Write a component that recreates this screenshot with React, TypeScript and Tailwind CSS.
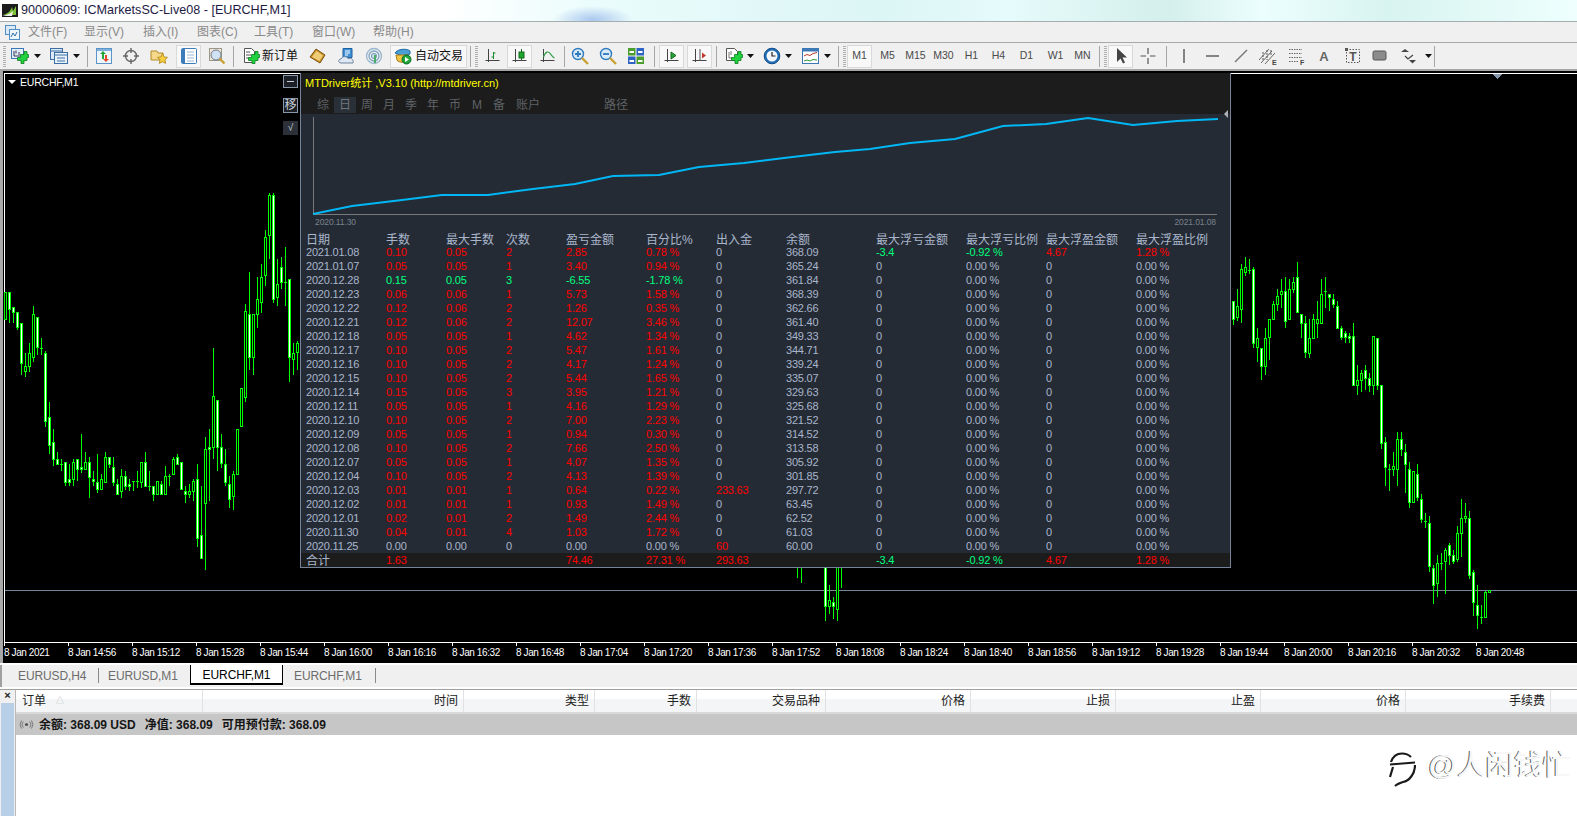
import React from "react";

const CN = '"Liberation Sans","Noto Sans CJK SC",sans-serif';

// [wickTop, bodyTop, bodyBottom, wickBottom, white?]  in zoom units
const LEFT: number[][] = [
[335,335,418,418,0],[335,335,388,425,1],[380,380,395,425,1],[395,395,440,447,1],[430,430,550,582,1],[520,557,572,587,0],[490,520,557,572,0],[378,403,530,542,0],[410,410,500,522,1],[475,505,505,522,0],
[514,520,722,737,1],[667,712,794,820,1],[748,787,838,855,1],[817,838,853,853,1],[838,853,853,870,0],[847,847,905,915,1],[852,898,905,915,1],[838,847,898,915,0],[838,838,868,900,1],[762,860,868,876,1],
[817,847,868,868,0],[832,847,890,950,1],[874,898,904,915,1],[823,905,928,935,1],[882,898,928,928,0],[817,832,905,905,0],[832,832,853,860,1],[832,860,905,915,1],[898,913,943,943,1],[868,889,934,950,0],
[874,889,919,928,1],[898,913,919,930,1],[904,904,904,930,0],[874,904,904,920,0],[847,847,905,920,0],[817,847,919,919,1],[874,919,919,930,0],[919,919,943,960,1],[904,904,943,943,0],[904,913,943,943,1],
[858,889,943,943,0],[882,889,889,915,0],[832,838,883,883,0],[823,832,853,853,1],[847,847,928,928,1],[919,934,943,965,1],[912,934,943,950,0],[898,904,934,960,0],[852,898,1075,1098,1],[919,1066,1135,1135,1],
[772,808,970,1166,0],[748,802,808,960,1],[505,647,802,833,0],[661,661,802,870,1],[763,802,848,860,1],[808,853,905,915,1],[889,913,958,980,1],[874,883,949,987,0],[748,748,883,883,0],[625,625,737,737,0],
[373,394,652,662,0],[277,403,530,567,1],[403,403,530,582,0],[292,358,403,440,0],[253,292,365,395,0],[151,172,284,315,0],[40,46,166,235,0],[40,46,358,365,1],[238,313,350,375,0],[232,262,307,323,1],
[202,307,307,375,0],[298,298,530,603,1],[490,520,536,582,0],[484,490,515,567,0],
];
const RIGHT: number[][] = [
[154,154,208,222,1],[118,169,200,210,0],[42,58,178,216,0],[22,52,67,75,0],[27,60,60,69,0],[52,58,280,290,1],[235,265,290,333,0],[295,295,347,387,1],[235,265,347,372,0],[208,208,260,327,0],
[153,163,208,208,0],[118,139,163,180,0],[88,124,133,170,0],[82,124,214,231,1],[88,118,208,208,0],[82,97,118,125,0],[37,82,185,185,1],[193,193,220,261,1],[198,220,305,320,1],[208,265,310,320,0],
[193,208,265,265,0],[153,208,220,262,0],[88,133,220,220,0],[82,124,124,170,0],[133,133,140,180,1],[133,148,163,171,1],[154,169,235,235,1],[228,235,260,267,1],[244,250,260,275,1],[250,259,265,275,1],
[220,259,406,406,1],[346,391,406,432,0],[361,370,391,423,0],[346,361,385,417,1],[370,385,406,423,1],[259,259,406,432,0],[265,265,406,417,1],[406,406,578,594,1],[562,577,650,705,1],[643,658,658,720,0],
[607,649,658,675,0],[547,568,658,705,0],[547,568,598,615,1],[583,607,643,726,1],[637,658,755,771,1],[664,664,755,755,0],[643,673,740,750,1],[733,748,806,816,1],[790,814,814,830,0],[799,820,947,962,1],
[946,955,1006,1059,1],[915,940,998,1038,0],[910,940,940,956,0],[895,901,932,1029,0],[880,886,916,942,1],[900,916,932,940,1],[828,850,926,933,0],[748,805,850,918,0],[760,799,805,816,0],[784,805,976,984,1],
[961,967,1057,1094,1],[1005,1066,1094,1134,1],[1066,1102,1102,1118,0],[1022,1027,1102,1102,0],[1021,1021,1027,1027,0],
];

function Candle({ x, d, oy }: { x: number; d: number[]; oy: number }) {
  const [t, a, b, w, f] = d.map((v, i) => (i < 4 ? Math.round(oy + v / 3) : v));
  return (
    <g>
      <line x1={x + 0.5} x2={x + 0.5} y1={t} y2={w + 1} stroke="#00ff00" />
      {a === b ? (
        <line x1={x - 1} x2={x + 2} y1={a + 0.5} y2={a + 0.5} stroke="#00ff00" />
      ) : (
        <rect x={x - 0.5} y={a + 0.5} width={2} height={b - a} fill={f ? "#ffffff" : "#000000"} stroke="#00ff00" />
      )}
    </g>
  );
}

function Chart() {
  return (
    <svg className="absolute left-0 top-0" width={1574} height={592} viewBox="3 71 1574 592" shapeRendering="crispEdges">
      <line x1={5} x2={1577} y1={590.5} y2={590.5} stroke="#75849a" />
      {LEFT.map((d, i) => <Candle key={i} x={5 + 4 * i} d={d} oy={180} />)}
      {RIGHT.map((d, i) => <Candle key={i} x={1233 + 4 * i} d={d} oy={250} />)}
      <line x1={797.5} x2={797.5} y1={560} y2={578} stroke="#00ff00" />
      <line x1={801.5} x2={801.5} y1={560} y2={583} stroke="#00ff00" />
      <Candle x={825} d={[60, 60, 198, 240, 1]} oy={540} />
      <Candle x={829} d={[135, 180, 197, 218, 0]} oy={540} />
      <Candle x={833} d={[172, 186, 197, 234, 1]} oy={540} />
      <Candle x={837} d={[60, 60, 208, 240, 0]} oy={540} />
      <line x1={841.5} x2={841.5} y1={560} y2={588} stroke="#00ff00" />
      <polygon points="1492,74 1502,74 1497,79" fill="#8496a8" />
    </svg>
  );
}

const ROWS: string[][] = [
["2021.01.08","0.10","0.05","2","2.85","0.78 %","0","368.09"],
["2021.01.07","0.05","0.05","1","3.40","0.94 %","0","365.24"],
["2020.12.28","0.15","0.05","3","-6.55","-1.78 %","0","361.84"],
["2020.12.23","0.06","0.06","1","5.73","1.58 %","0","368.39"],
["2020.12.22","0.12","0.06","2","1.26","0.35 %","0","362.66"],
["2020.12.21","0.12","0.06","2","12.07","3.46 %","0","361.40"],
["2020.12.18","0.05","0.05","1","4.62","1.34 %","0","349.33"],
["2020.12.17","0.10","0.05","2","5.47","1.61 %","0","344.71"],
["2020.12.16","0.10","0.05","2","4.17","1.24 %","0","339.24"],
["2020.12.15","0.10","0.05","2","5.44","1.65 %","0","335.07"],
["2020.12.14","0.15","0.05","3","3.95","1.21 %","0","329.63"],
["2020.12.11","0.05","0.05","1","4.16","1.29 %","0","325.68"],
["2020.12.10","0.10","0.05","2","7.00","2.23 %","0","321.52"],
["2020.12.09","0.05","0.05","1","0.94","0.30 %","0","314.52"],
["2020.12.08","0.10","0.05","2","7.66","2.50 %","0","313.58"],
["2020.12.07","0.05","0.05","1","4.07","1.35 %","0","305.92"],
["2020.12.04","0.10","0.05","2","4.13","1.39 %","0","301.85"],
["2020.12.03","0.01","0.01","1","0.64","0.22 %","233.63","297.72"],
["2020.12.02","0.01","0.01","1","0.93","1.49 %","0","63.45"],
["2020.12.01","0.02","0.01","2","1.49","2.44 %","0","62.52"],
["2020.11.30","0.04","0.01","4","1.03","1.72 %","0","61.03"],
["2020.11.25","0.00","0.00","0","0.00","0.00 %","60","60.00"],
];
const GRID = "grid grid-cols-[80px_60px_60px_60px_80px_70px_70px_90px_90px_80px_90px_1fr] h-[14px] items-center leading-[14px] whitespace-nowrap";
const HEAD = ["日期","手数","最大手数","次数","盈亏金额","百分比%","出入金","余额","最大浮亏金额","最大浮亏比例","最大浮盈金额","最大浮盈比例"];
const GREY = "text-[#a9b6cc]", RED = "text-[#ff0000]", GRN = "text-[#00ff7f]";

function Row({ r, first }: { r: string[]; first: boolean }) {
  const neg = r[4].startsWith("-");
  const zero = r[4] === "0.00";
  const c = zero ? GREY : neg ? GRN : RED;
  const io = r[6] === "0" ? GREY : RED;
  return (
    <div className={GRID}>
      <span className={GREY}>{r[0]}</span>
      {r.slice(1, 6).map((v, i) => <span key={i} className={c}>{v}</span>)}
      <span className={io}>{r[6]}</span>
      <span className={GREY}>{r[7]}</span>
      {first ? (
        <>
          <span className={GRN}>-3.4</span><span className={GRN}>-0.92 %</span>
          <span className={RED}>4.67</span><span className={RED}>1.28 %</span>
        </>
      ) : (
        <>
          <span className={GREY}>0</span><span className={GREY}>0.00 %</span>
          <span className={GREY}>0</span><span className={GREY}>0.00 %</span>
        </>
      )}
    </div>
  );
}

const CURVE = "313,214 352,206 402,200 442,195 488,195 533,189 575,184 613,176 659,175 699,167 744,163 784,158 835,152 870,149 910,143 955,139 1003,126 1046,124 1088,118 1133,125 1177,121 1218,119";

function Panel() {
  const tabs = ["综","日","周","月","季","年","币","M","备"];
  return (
    <div className="absolute left-[297px] top-[2px] w-[931px] h-[495px] bg-[#252b34] border-l border-r border-b border-[#75849a] flex flex-col text-[11px] tracking-[-0.2px]">
      <div className="bg-[#1c1c1c] h-[41px] shrink-0 flex flex-col">
        <div className="h-[20px] pl-[4px] pt-[1px] flex items-center text-[#ffff00] text-[11px] tracking-normal whitespace-nowrap">MTDriver统计 ,V3.10 (http://mtdriver.cn)</div>
        <div className="mt-[4px] h-[16px] pl-[11px] flex items-center text-[#5e6266] text-[12px] tracking-normal">
          {tabs.map((t, i) => (
            <span key={i} className={i === 1 ? "w-[22px] h-[16px] leading-[17px] text-[#72767c] bg-[#2a3038] text-center" : "w-[22px] h-[16px] leading-[17px] text-center"}>{t}</span>
          ))}
          <span className="ml-[6px] w-[88px] leading-[17px]">账户</span>
          <span className="leading-[17px]">路径</span>
        </div>
      </div>
      <div className="h-[117px] shrink-0 flex flex-col">
        <svg width={928} height={103} viewBox="301 114 928 103" className="block overflow-visible">
          <polyline points="313.5,117 313.5,214.5 1217,214.5" fill="none" stroke="#77797c" shapeRendering="crispEdges" />
          <polyline points={CURVE} fill="none" stroke="#00b7f5" strokeWidth={2} />
          <polygon points="1224,114 1228,110 1228,118" fill="#aeb2b6" />
        </svg>
        <div className="h-[10px] flex justify-between pl-[14px] pr-[14px] text-[8.5px] leading-[10px] tracking-[-0.1px] text-[#79828e]">
          <span>2020.11.30</span><span>2021.01.08</span>
        </div>
      </div>
      <div className="pl-[5px]">
        <div className={GRID + " text-[12px] tracking-normal"}>
          {HEAD.map((h, i) => <span key={i} className={GREY + " translate-y-[2px]"}>{h}</span>)}
        </div>
        {ROWS.map((r, i) => <Row key={i} r={r} first={i === 0} />)}
      </div>
      <div className="bg-[#1c1c1c] h-[14px] pl-[5px] overflow-hidden">
        <div className={GRID}>
          <span className={GREY + " text-[12px] tracking-normal translate-y-[1px]"}>合计</span>
          <span className={RED}>1.63</span><span /><span />
          <span className={RED}>74.46</span><span className={RED}>27.31 %</span><span className={RED}>293.63</span><span />
          <span className={GRN}>-3.4</span><span className={GRN}>-0.92 %</span>
          <span className={RED}>4.67</span><span className={RED}>1.28 %</span>
        </div>
      </div>
    </div>
  );
}

const TIMES = ["8 Jan 2021","8 Jan 14:56","8 Jan 15:12","8 Jan 15:28","8 Jan 15:44","8 Jan 16:00","8 Jan 16:16","8 Jan 16:32","8 Jan 16:48","8 Jan 17:04","8 Jan 17:20","8 Jan 17:36","8 Jan 17:52","8 Jan 18:08","8 Jan 18:24","8 Jan 18:40","8 Jan 18:56","8 Jan 19:12","8 Jan 19:28","8 Jan 19:44","8 Jan 20:00","8 Jan 20:16","8 Jan 20:32","8 Jan 20:48"];

/* ---------- toolbar icons ---------- */
const S = ({ children, w = 18, h = 18 }: { children: React.ReactNode; w?: number; h?: number }) => (
  <svg width={w} height={h} viewBox={`0 0 ${w} ${h}`} className="block shrink-0">{children}</svg>
);
const Plus = () => <path d="M9.5 7.5h3.5V4.5h3v3h1.500v3H16v3h-3v3h-3v-3H6.500v-3h3z" fill="#22d13e" stroke="#0b7d1e" strokeWidth={0.8} />;
const Caret = () => <svg width={7} height={4} viewBox="0 0 7 4" className="block shrink-0"><path d="M0 0h7L3.500 4z" fill="#111" /></svg>;
const Axis = ({ c = "#444" }: { c?: string }) => <path d="M4.500 2v13M1.500 13.500h14" stroke={c} strokeWidth={1} fill="none" />;

const I = {
  newChart: <S><rect x=".5" y="1.500" width="12" height="10" fill="#e3eef8" stroke="#3b78b5" /><path d="M3 4v5h7M5 3.500v3M8 5v3" stroke="#335" fill="none" /><Plus /></S>,
  profiles: <S><rect x=".5" y="1.500" width="12" height="11" fill="#dfe9f5" stroke="#3b6ea5" /><rect x="4.500" y="5.500" width="13" height="11" fill="#eaf2fa" stroke="#3b6ea5" /><path d="M1 4h11M5 8h12M7 11h8M7 14h8" stroke="#3b6ea5" /></S>,
  market: <S><rect x="1.500" y="1.500" width="15" height="15" fill="#eef5fb" stroke="#5c93c8" /><rect x="2" y="2" width="14" height="2" fill="#7fb0dc" /><path d="M7 12V7H5l3-3 3 3H9v5z" fill="#25a83a" /><path d="M10 8h2v4h2l-3 3-3-3h2z" fill="#e24a2b" /></S>,
  cross: <S><circle cx="9" cy="9" r="5.500" fill="none" stroke="#666" strokeWidth={1.4} /><path d="M9 1v5M9 12v5M1 9h5M12 9h5" stroke="#666" strokeWidth={1.4} /></S>,
  nav: <S><path d="M1 4h6l1 2h5v7H1z" fill="#f4d98a" stroke="#b58c2a" /><path d="M12.500 6.500l1.600 3.400 3.400.5-2.500 2.400.6 3.600-3.100-1.700-3.100 1.700.6-3.600-2.500-2.400 3.400-.5z" fill="#f5cf3f" stroke="#a97f16" strokeWidth={.8} /></S>,
  term: <S><rect x="1.500" y="1.500" width="15" height="15" rx="1" fill="#fff" stroke="#3c7cba" /><rect x="2" y="2" width="3" height="14" fill="#3c7cba" /><path d="M7 5h7M7 8h7M7 11h7M7 14h7" stroke="#9ab8d6" /></S>,
  tester: <S><rect x="1.500" y="1.500" width="12" height="12" fill="#eee6dc" stroke="#998" /><circle cx="8" cy="8" r="5" fill="#cfe3f4" stroke="#778" /><path d="M11.500 11.500l5 5" stroke="#c9a032" strokeWidth={2.4} /></S>,
  order: <S><path d="M2.500 1.500h7l3 3v6h-2v5h-8z" fill="#fff" stroke="#555" /><path d="M4 5h4M4 8h5M4 11h3" stroke="#555" /><Plus /></S>,
  book: <S><path d="M1 10L7 2l9 6-5 8z" fill="#c98f24" stroke="#7a5210" /><path d="M3 10l4.500-6 6.500 4.500-3.500 5.500z" fill="#efcd78" /></S>,
  doc: <S><path d="M5 1.500h9v9H5z" fill="#3d8fd6" stroke="#1e5f9e" /><path d="M7 4h5M7 6h5M7 8h3" stroke="#fff" /><path d="M3 16c-3 0-3-4 0-4 1-3 6-3 7-.5 3-1 6 1 5 4.500z" fill="#dfe8f2" stroke="#6d84a0" /></S>,
  signal: <S><circle cx="9" cy="9" r="7.500" fill="none" stroke="#9db9d0" strokeWidth={1.4} /><circle cx="9" cy="9" r="5" fill="none" stroke="#7ea4c4" strokeWidth={1.3} /><circle cx="9" cy="9" r="2.600" fill="#c9dae8" stroke="#6f96b5" /><path d="M10 8v8" stroke="#2da84a" strokeWidth={1.6} /></S>,
  auto: <S><path d="M1 6c2-4 12-5 15-2v3l-8 2z" fill="#4a9fd8" stroke="#236a9e" /><path d="M2 8h12v5c0 3-10 3-11 0z" fill="#f3c545" stroke="#a37c14" /><circle cx="12.500" cy="12.500" r="4.500" fill="#1fa63a" stroke="#0b6d22" /><path d="M11 10l4 2.500-4 2.500z" fill="#fff" /></S>,
  bars: <S><Axis /><path d="M9.500 5v7M7.500 10h2M9.500 6h2" stroke="#1a8a2a" /></S>,
  candle: <S><Axis /><rect x="8" y="5" width="5" height="6" fill="#1fa62f" stroke="#116a1c" /><path d="M10.500 2v3M10.500 11v2" stroke="#116a1c" /></S>,
  line: <S><Axis /><path d="M4.500 10c2-6 5-6 7-3 1 1 2 3 4 4" stroke="#3aa04a" fill="none" strokeWidth={1.2} /></S>,
  zin: <S><circle cx="7" cy="7" r="5.500" fill="#d8ebfa" stroke="#2f79bd" strokeWidth={1.4} /><path d="M4 7h6M7 4v6" stroke="#2f79bd" strokeWidth={1.8} /><path d="M11 11l6 6" stroke="#c9a032" strokeWidth={2.4} /></S>,
  zout: <S><circle cx="7" cy="7" r="5.500" fill="#d8ebfa" stroke="#2f79bd" strokeWidth={1.4} /><path d="M4 7h6" stroke="#2f79bd" strokeWidth={1.8} /><path d="M11 11l6 6" stroke="#c9a032" strokeWidth={2.4} /></S>,
  tile: <S><rect x="1" y="1" width="7.500" height="7.500" fill="#4b9e2d" /><rect x="9.500" y="1" width="7.500" height="7.500" fill="#2c63c4" /><rect x="1" y="9.500" width="7.500" height="7.500" fill="#2c63c4" /><rect x="9.500" y="9.500" width="7.500" height="7.500" fill="#4b9e2d" /><path d="M2.500 5h4.500M11 5h4.500M2.500 14h4.500M11 14h4.500" stroke="#fff" strokeWidth={2} /></S>,
  scroll: <S><Axis /><path d="M8 5l5 3.500-5 3.500z" fill="#2aa53a" stroke="#116a1c" /></S>,
  shift: <S><Axis /><path d="M9 2v12" stroke="#555" /><path d="M15 8.500l-4-3v6z" fill="#c0392b" /></S>,
  tpl: <S><path d="M1.500 1.500h8l3 3v9h-11z" fill="#fff" stroke="#555" /><path d="M4 5v6h3M6 4v4" stroke="#777" fill="none" /><Plus /></S>,
  clock: <S><circle cx="9" cy="9" r="7.800" fill="#1f6fb8" stroke="#124b85" /><circle cx="9" cy="9" r="5.500" fill="#f3f7fb" /><path d="M9 5v4h3.500" stroke="#222" fill="none" strokeWidth={1.2} /></S>,
  ind: <S><rect x=".5" y="1.500" width="16" height="15" fill="#fff" stroke="#3b78b5" /><rect x="1" y="2" width="15" height="2.500" fill="#3b78b5" /><path d="M2 9l3-1.500 3 1 3-2 4-1" stroke="#b63a2a" fill="none" /><path d="M2 14l3-1 3 1 3-1.500 4 .5" stroke="#2a9a3a" fill="none" /></S>,
  arrow: <S><path d="M5 1v14l3.500-3.500 2.500 5 2-1-2.500-5H15z" fill="#444" /></S>,
  plus: <S><path d="M9 1v6M9 11v6M1.500 9h5.500M11 9h5.500" stroke="#555" strokeWidth={1.2} /></S>,
  v: <S><path d="M9 2v14" stroke="#555" strokeWidth={1.4} /></S>,
  h: <S><path d="M2 9h13" stroke="#555" strokeWidth={1.4} /></S>,
  t: <S><path d="M3 15L15 3" stroke="#777" strokeWidth={1.5} /></S>,
  chan: <S w={20}><path d="M1 13L11 2M3 16L14 4M7 17L17 6" stroke="#666" /><path d="M5 5v9M9 3v10M13 3v6" stroke="#555" strokeDasharray="2 1" /><text x="14" y="18" fontSize="7" fontWeight="700" fontFamily="Liberation Sans" fill="#444">E</text></S>,
  fibo: <S w={20}><path d="M2 2.500h13M2 6.500h13M2 10.500h13M2 14.500h10" stroke="#666" strokeDasharray="1.500 1" /><text x="13" y="18" fontSize="7" fontWeight="700" fontFamily="Liberation Sans" fill="#444">F</text></S>,
  a: <S><text x="9" y="14" textAnchor="middle" fontSize="13" fontWeight="700" fontFamily="Liberation Sans" fill="#666">A</text></S>,
  txt: <S><rect x="2.500" y="2.500" width="13" height="13" fill="none" stroke="#555" strokeDasharray="1.500 1.500" /><rect x="1" y="1" width="3" height="3" fill="#555" /><text x="9" y="14" textAnchor="middle" fontSize="12" fontWeight="700" fontFamily="Liberation Sans" fill="#555">T</text></S>,
  rect: <S><rect x="2" y="4" width="13" height="9" rx="1.500" fill="#8c8c8c" stroke="#555" /></S>,
  arrows: <S><path d="M5 2l4 3H1z" fill="#444" /><path d="M5 9l3 3 5-4" stroke="#444" fill="none" strokeWidth={1.2} /><path d="M9 13h7l-3.500 3.500z" fill="#444" /></S>,
};

const Sep = ({ w }: { w: string }) => (
  <div className={`${w} h-full flex items-center justify-center shrink-0`}><div className="w-[1px] h-[21px] bg-[#a6a6a6]" /></div>
);
const Grip = ({ w }: { w: string }) => (
  <div className={`${w} h-full flex items-center justify-center shrink-0`}><div className="w-[3px] h-[21px] bg-[repeating-linear-gradient(#b0b0b0_0,#b0b0b0_1px,transparent_1px,transparent_2px)]" /></div>
);
const Btn = ({ cls, on, children }: { cls: string; on?: boolean; children: React.ReactNode }) => (
  <div className={`${cls} h-[23px] flex items-center justify-center shrink-0 ${on ? "bg-[#f8f8f8] border border-[#d9d9d9]" : ""}`}>{children}</div>
);
const Tf = ({ cls, on, t }: { cls: string; on?: boolean; t: string }) => (
  <Btn cls={cls} on={on}><span className="text-[10.5px] text-[#4a4a4a]">{t}</span></Btn>
);

function Toolbar() {
  return (
    <div className="h-[29px] bg-[#f0f0f0] border-t border-[#a8a8a8] border-b-2 border-b-[#a6a6a6] flex items-center shrink-0" >
      <Grip w="ml-[1px] w-[6px]" />
      <Btn cls="ml-[1px] w-[36px] gap-[5px]">{I.newChart}<Caret /></Btn>
      <Btn cls="ml-[3px] w-[36px] gap-[5px]">{I.profiles}<Caret /></Btn>
      <Sep w="w-[8px]" />
      <Btn cls="w-[25px]">{I.market}</Btn>
      <Btn cls="ml-[2px] w-[25px]">{I.cross}</Btn>
      <Btn cls="ml-[3px] w-[26px]">{I.nav}</Btn>
      <Btn cls="ml-[4px] w-[25px]" on>{I.term}</Btn>
      <Btn cls="ml-[3px] w-[25px]">{I.tester}</Btn>
      <Sep w="w-[8px]" />
      <Btn cls="ml-[3px] w-[60px] gap-[2px]">{I.order}<span className="text-[12px] text-[#111] whitespace-nowrap">新订单</span></Btn>
      <Btn cls="ml-[5px] w-[25px]">{I.book}</Btn>
      <Btn cls="ml-[4px] w-[25px]">{I.doc}</Btn>
      <Btn cls="ml-[2px] w-[25px]">{I.signal}</Btn>
      <Btn cls="ml-[4px] w-[77px] gap-[3px]" on>{I.auto}<span className="text-[12px] text-[#111] whitespace-nowrap">自动交易</span></Btn>
      <Sep w="w-[6px]" />
      <Grip w="w-[7px]" />
      <Btn cls="w-[25px]">{I.bars}</Btn>
      <Btn cls="ml-[2px] w-[25px]" on>{I.candle}</Btn>
      <Btn cls="ml-[3px] w-[25px]">{I.line}</Btn>
      <Sep w="w-[8px]" />
      <Btn cls="w-[23px]">{I.zin}</Btn>
      <Btn cls="ml-[4px] w-[25px]">{I.zout}</Btn>
      <Btn cls="ml-[3px] w-[25px]">{I.tile}</Btn>
      <Sep w="ml-[2px] w-[8px]" />
      <Btn cls="ml-[1px] w-[25px]" on>{I.scroll}</Btn>
      <Btn cls="ml-[3px] w-[25px]" on>{I.shift}</Btn>
      <Sep w="w-[8px]" />
      <Btn cls="ml-[2px] w-[34px] gap-[4px]">{I.tpl}<Caret /></Btn>
      <Btn cls="ml-[4px] w-[35px] gap-[4px]">{I.clock}<Caret /></Btn>
      <Btn cls="ml-[3px] w-[36px] gap-[4px]">{I.ind}<Caret /></Btn>
      <Sep w="w-[8px]" />
      <Grip w="w-[5px]" />
      <Tf cls="w-[25px]" on t="M1" />
      <Tf cls="ml-[3px] w-[25px]" t="M5" />
      <Tf cls="ml-[3px] w-[25px]" t="M15" />
      <Tf cls="ml-[3px] w-[25px]" t="M30" />
      <Tf cls="ml-[3px] w-[25px]" t="H1" />
      <Tf cls="ml-[2px] w-[25px]" t="H4" />
      <Tf cls="ml-[3px] w-[25px]" t="D1" />
      <Tf cls="ml-[4px] w-[25px]" t="W1" />
      <Tf cls="ml-[2px] w-[25px]" t="MN" />
      <Sep w="w-[8px]" />
      <Grip w="w-[5px]" />
      <Btn cls="w-[25px]" on>{I.arrow}</Btn>
      <Btn cls="ml-[2px] w-[25px]">{I.plus}</Btn>
      <Sep w="ml-[2px] w-[8px]" />
      <Btn cls="ml-[1px] w-[25px]">{I.v}</Btn>
      <Btn cls="ml-[4px] w-[25px]">{I.h}</Btn>
      <Btn cls="ml-[3px] w-[25px]">{I.t}</Btn>
      <Btn cls="ml-[2px] w-[25px]">{I.chan}</Btn>
      <Btn cls="ml-[4px] w-[25px]">{I.fibo}</Btn>
      <Btn cls="ml-[2px] w-[25px]">{I.a}</Btn>
      <Btn cls="ml-[4px] w-[25px]">{I.txt}</Btn>
      <Btn cls="ml-[2px] w-[25px]">{I.rect}</Btn>
      <Btn cls="ml-[4px] w-[34px] justify-start pl-[4px] gap-[7px]">{I.arrows}<Caret /></Btn>
      <Sep w="w-[8px]" />
    </div>
  );
}

const COLS: [string, string][] = [
  ["w-[261px]","时间"],["w-[131px]","类型"],["w-[102px]","手数"],["w-[129px]","交易品种"],["w-[145px]","价格"],
  ["w-[145px]","止损"],["w-[145px]","止盈"],["w-[145px]","价格"],["w-[145px]","手续费"],
];

export default function App() {
  return (
    <div className="w-[1577px] h-[816px] overflow-hidden flex flex-col bg-white text-[12px]" style={{ fontFamily: CN }}>
      {/* title bar */}
      <div className="h-[21px] shrink-0 flex items-center pl-[2px] gap-[3px] bg-[radial-gradient(ellipse_40px_14px_at_593px_20px,#a9c6ee_0,transparent_100%),linear-gradient(90deg,#fff_0,#fff_28%,#eafcfc_38%,#dcf5f5_56%,#e6fbfb_64%,#d4efec_74%,#ecfefe_80%,#d8f4f0_88%,#eefffe_100%)]">
        <svg width={16} height={13} viewBox="0 0 16 13" className="block shrink-0"><rect width="16" height="13" fill="#1c1c1c" /><path d="M1 11C5 10 8 8 10 3l1 4 3-5v9z" fill="#7ec23a" /><path d="M0 12c5-1 8-2 11-5l-1 5z" fill="#eee" /></svg>
        <span className="text-[12.6px] text-[#241a44] whitespace-nowrap">90000609: ICMarketsSC-Live08 - [EURCHF,M1]</span>
      </div>
      {/* menu bar */}
      <div className="h-[21px] shrink-0 bg-[#f0f0f0] border-t border-[#a3aeae] flex items-center text-[12px] text-[#8a8a8a] relative">
        <svg width={15} height={15} viewBox="0 0 15 15" className="ml-[5px] block shrink-0"><rect x=".5" y=".5" width="10" height="9" fill="#dbe9f6" stroke="#4f8fc6" /><rect x="4.500" y="4.500" width="10" height="10" fill="#eef5fb" stroke="#4f8fc6" /><path d="M6 12l2-4 2 3 2-4" stroke="#2f6fa8" fill="none" /></svg>
        <span className="ml-[8px] w-[56px]">文件(F)</span>
        <span className="w-[59px]">显示(V)</span>
        <span className="w-[54px]">插入(I)</span>
        <span className="w-[57px]">图表(C)</span>
        <span className="w-[58px]">工具(T)</span>
        <span className="w-[61px]">窗口(W)</span>
        <span>帮助(H)</span>
      </div>
      <Toolbar />
      {/* chart */}
      <div className="h-[594px] shrink-0 flex bg-black border-b-2 border-white">
        <div className="w-[3px] bg-[#a8a8a8] shrink-0" />
        <div className="flex-1 relative pl-[1px] pt-[2px]">
          <div className="h-[570px] border-l border-t border-b border-white" />
          <div className="flex text-white text-[10px] tracking-[-0.4px] leading-[13px] whitespace-nowrap">
            {TIMES.map((t, i) => (
              <div key={i} className="w-[64px] shrink-0">
                <div className="w-[1px] h-[3px] bg-white" />
                <span>{t}</span>
              </div>
            ))}
          </div>
          <Chart />
          <div className="absolute left-[5px] top-[5px] flex items-center gap-[4px] text-white text-[10.5px] tracking-[-0.2px] leading-[12px]">
            <span className="w-0 h-0 border-l-[4px] border-r-[4px] border-t-[4px] border-l-transparent border-r-transparent border-t-white" />
            EURCHF,M1
          </div>
          <div className="absolute left-[280px] top-[4px] w-[15px] h-[13px] border border-[#8a99aa] bg-[#1c2026] flex items-center justify-center">
            <span className="block w-[7px] h-[1px] bg-[#c8d0da]" />
          </div>
          <div className="absolute left-[280px] top-[27px] w-[15px] h-[15px] border border-[#8a99aa] bg-[#1c2026] text-[#c8d0da] text-[12px] leading-[13px] text-center overflow-hidden">移</div>
          <div className="absolute left-[280px] top-[50px] w-[15px] h-[14px] bg-[#2c3038] text-[#c8d0da] text-[10px] leading-[14px] text-center">√</div>
          <Panel />
        </div>
      </div>
      {/* tabs */}
      <div className="h-[22px] shrink-0 bg-[#f0f0f0] flex items-start border-l-2 border-[#a0a0a0] text-[12px] tracking-[-0.1px] text-[#6c6c6c] whitespace-nowrap">
        <span className="ml-[16px] h-[22px] leading-[22px] w-[80px]">EURUSD,H4</span>
        <span className="w-[1px] h-[15px] mt-[3px] bg-[#8a8a8a] mr-[9px]" />
        <span className="h-[22px] leading-[22px] w-[82px]">EURUSD,M1</span>
        <span className="w-[93px] h-[20px] leading-[20px] bg-white border border-t-0 border-black border-b-2 text-black text-center">EURCHF,M1</span>
        <span className="ml-[11px] h-[22px] leading-[22px] w-[81px]">EURCHF,M1</span>
        <span className="w-[1px] h-[15px] mt-[3px] bg-[#8a8a8a]" />
      </div>
      <div className="h-[2px] bg-white shrink-0" />
      {/* terminal */}
      <div className="flex-1 flex min-h-0 border-t border-[#a0a0a0]">
        <div className="w-[16px] shrink-0 bg-[#f0f0f0] flex flex-col border-r border-[#b8b8b8]">
          <div className="h-[13px] text-[11px] font-bold leading-[9px] text-center pt-[1px] text-[#222]">×</div>
          <div className="flex-1 ml-[1px] mr-[1px] bg-[#b7d0e8]" />
        </div>
        <div className="flex-1 flex flex-col min-w-0">
          <div className="h-[24px] shrink-0 flex text-[12px] text-[#222] border-b-2 border-[#d9d9d9] bg-[linear-gradient(#fff_0,#fff_40%,#f3f5f6_40%,#f3f5f6_100%)]">
            <div className="w-[187px] shrink-0 border-r border-[#e2e2e2] pl-[6px] flex items-center gap-[10px]">订单<span className="text-[8px] text-[#bbb]">△</span></div>
            {COLS.map(([w, t], i) => (
              <div key={i} className={`${w} shrink-0 border-r border-[#e2e2e2] pr-[5px] flex items-center justify-end`}>{t}</div>
            ))}
          </div>
          <div className="h-[21px] shrink-0 bg-[#c6c6c6] flex items-center pl-[3px] font-bold text-[12px] text-[#161616] whitespace-nowrap">
            <svg width={15} height={9} viewBox="0 0 15 9" className="block mr-[5px] shrink-0"><circle cx="7.500" cy="4.500" r="1.600" fill="#555" /><path d="M4.500 1.500a4 4 0 000 6M10.500 1.500a4 4 0 010 6M2.500 .500a7 7 0 000 8M12.500 .500a7 7 0 010 8" stroke="#777" fill="none" /></svg>
            <span>余额: 368.09 USD</span>
            <span className="ml-[9px]">净值: 368.09</span>
            <span className="ml-[9px]">可用预付款: 368.09</span>
          </div>
          <div className="flex-1 relative">
            <div className="absolute left-[1372px] top-[17px] flex items-start gap-[12px]">
              <svg width={28} height={36} viewBox="0 0 28 36" className="block shrink-0" fill="none" stroke="#1a1a1a" strokeWidth={2.2}>
                <path d="M3 10C5 4 9 1.500 14 1.500 17 1.500 21 3 23 5" />
                <path d="M2 12.500L27 10.500" />
                <path d="M5 15L2 25" />
                <path d="M27 13C27 22 21 29 15 30 12 31 9 32 7 34" />
              </svg>
              <span className="-mt-[2px] text-[28px] leading-[32px] text-[#f7f7f7] [text-shadow:-1px_0_0_#555] tracking-[0.5px] whitespace-nowrap">@人闲钱忙</span>
            </div>
          </div>
        </div>
      </div>
    </div>
  );
}
